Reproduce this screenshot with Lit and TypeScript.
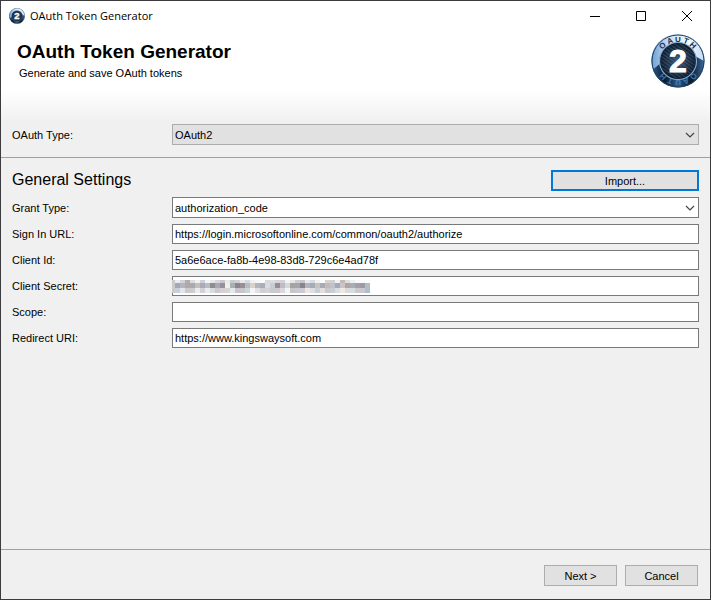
import { LitElement, html, css, svg } from "lit";
import { customElement, property } from "lit/decorators.js";

@customElement("oauth-badge")
class OauthBadge extends LitElement {
  @property({ type: Boolean }) small = false;

  static styles = css`
    :host { display: block; width: 54px; height: 54px; flex: none; }
    :host([small]) { width: 16px; height: 16px; }
    svg { display: block; width: 100%; height: 100%; }
    text { font-family: "Liberation Sans", Arial, sans-serif; font-weight: bold; text-anchor: middle; }
    .digit { font-size: 32px; fill: #fff; stroke: #fff; stroke-width: 1px; }
    .ring { font-size: 8px; fill: #15304e; }
    .low { fill: #4f8fca; opacity: 0.75; }
  `;

  private letters(cls: string, turn: number) {
    const angles = [-45, -22, 0, 22, 44];
    return "OAUTH".split("").map(
      (c, i) => svg`<text class=${cls} x="27" y="8" transform="rotate(${angles[i] + turn} 27 27)">${c}</text>`,
    );
  }

  render() {
    return html`<svg viewBox="0 0 54 54" aria-hidden="true">
      <defs>
        <linearGradient id="top" x1="0" y1="0" x2="1" y2="0">
          <stop offset="0" stop-color="#6c9fd3" />
          <stop offset=".3" stop-color="#c3daf1" />
          <stop offset=".7" stop-color="#f4f9ff" />
          <stop offset="1" stop-color="#c3dcf5" />
        </linearGradient>
        <linearGradient id="bottom" x1="0" y1="0" x2="1" y2="0">
          <stop offset="0" stop-color="#2f5e90" />
          <stop offset=".25" stop-color="#0b1a2c" />
          <stop offset=".5" stop-color="#2b5c90" />
          <stop offset=".75" stop-color="#0b1828" />
          <stop offset="1" stop-color="#3d6d9f" />
        </linearGradient>
        <radialGradient id="core">
          <stop offset="0" stop-color="#3b5878" />
          <stop offset="1" stop-color="#0a1728" />
        </radialGradient>
        <pattern id="weave" width="3" height="3" patternUnits="userSpaceOnUse" patternTransform="rotate(35)">
          <path d="M0 0H3" stroke="#7f9db9" stroke-width="1" opacity=".5" />
        </pattern>
      </defs>
      <circle cx="27" cy="27" r="26.5" fill="url(#bottom)" />
      <path d="M2 35.500A26.300 26.300 0 1 1 53 27L44 22L12 27Z" fill="url(#top)" />
      <circle cx="27" cy="27" r="26" fill="none" stroke="#1f3f63" stroke-width="1" />
      ${this.small ? "" : [this.letters("ring", 0), this.letters("ring low", 180)]}
      <circle cx="27" cy="27" r="18.500" fill="url(#core)" stroke="#7fa9d3" stroke-width="1.200" />
      <circle cx="27" cy="27" r="17.500" fill="url(#weave)" />
      <text class="digit" x="27" y="38">2</text>
    </svg>`;
  }
}

const MOSAIC = [
  "cbcbcb ececf0 cfd2dc b9a9a4 dcdce2 f0f0f0 ccd1d6 f4f4f4 e8e8ec d9d5d8 c9c6cf e6eae8 c9c9c9 d0d0d8 e8e8ee d3dce0 eef1f1 f6f6f6 fafafa d9d9d9 d8dde2 dcd2d4 cdd3d8 f4f4f4 e6e6e6 d0ccd0 c4c6ce e9e9e9 d6dde2 f0f0f0 fbfbfb dcd2d0 d0d0d0 f2f2f2 c6b9b4 dfdfdf f0f0f0 f8f8f8 fafafa fdfdfd",
  "cbcbcb a5a7b6 b4b6bf b3a8a4 a6aab5 c8beb9 a9abba b8bcc6 8f8c8e a8a8b2 978f9e edf2e2 a9afb8 8b8590 989097 b9bcc7 d8d2c8 b5b5bd adadb8 d9dde2 c6ccd2 9a8c93 c1bcc4 d0dae0 a9a39f a4a4ae 87838f b0b5be a6abb7 c9c3c0 aaaab4 c4bbb8 bcc3cb a4a8b8 c6c6ca b1a4a1 a9adb8 a5a0a5 9b9ba6 b0bec8",
  "cbcbcb c9cede e5e5e9 cacaca cdcdcd ececec d2d2d6 e6edf0 dadada c9c9cd d5d0d8 d6d6d0 e3e8ee c9c4cb c7c7c7 cbd5da f4f4f4 e0e0e0 cfcfd5 d2d2d8 c4ccd0 cfc7c9 d6dadf f4f4f4 c7c7cb c9c9d2 d0c9d3 eee6e0 dbe0e7 c7cfd4 e3dedb c9c9cc c8ced5 d8dde6 efe8e2 dadada d6dce0 cacaca c8c8d0 aebfc9",
].map((row) => row.split(" "));

@customElement("app-root")
class AppRoot extends LitElement {
  static styles = css`
    :host { display: block; color: #000; font: 11px/16px "Liberation Sans", Arial, sans-serif; }
    * { box-sizing: border-box; }
    .window { display: flex; flex-direction: column; min-height: 100vh; border: 1px solid #3c3c3e; background: #f0f0f0; }
    .titlebar { display: flex; align-items: center; height: 29px; padding-left: 8px; background: #fff; }
    .caption { flex: 1; margin-left: 5px; font-family: "Open Sans", "Noto Sans", sans-serif; }
    .sys { display: flex; align-items: center; justify-content: center; width: 46px; height: 29px; padding: 0; border: 0; background: none; }
    .banner { display: flex; justify-content: space-between; padding: 4px 5px 0 16px; height: 92px; background: linear-gradient(#fff 60px, #f0f0f0 92px); }
    h1 { margin: 7px 0 2px; font-size: 19px; line-height: 22px; }
    .sub { margin: 0 0 0 2px; }
    .row { display: grid; grid-template-columns: 160px 1fr; align-items: center; padding: 0 11px; }
    .type { padding-top: 2px; padding-bottom: 12px; border-bottom: 1px solid #a0a0a0; }
    .general { display: flex; flex: 1; flex-direction: column; gap: 6px; padding-top: 12px; }
    .head { display: flex; align-items: flex-start; justify-content: space-between; padding: 0 11px; }
    h2 { margin: 0; font-size: 16px; line-height: 20px; font-weight: normal; }
    .field { position: relative; display: grid; }
    input, select { width: 100%; height: 20px; margin: 0; padding: 0 2px; border: 1px solid #7a7a7a; border-radius: 0; background: #fff; color: #000; font: inherit; }
    select { height: 21px; appearance: none; }
    .type select { border-color: #adadad; background: #e1e1e1; }
    .chevron { position: absolute; right: 4px; top: 8px; pointer-events: none; }
    .mosaic { position: absolute; left: 0; top: 4px; pointer-events: none; }
    .footer { display: flex; justify-content: flex-end; gap: 8px; padding: 15px 12px 13px; border-top: 1px solid #a0a0a0; }
    .btn { width: 73px; height: 21px; padding: 0; border: 1px solid #adadad; background: #e1e1e1; color: #000; font: inherit; }
    .import { width: 148px; border: 2px solid #0078d7; }
  `;

  private chevron() {
    return html`<svg class="chevron" width="10" height="7" viewBox="0 0 10 7" aria-hidden="true">
      <path d="M1 1L5 5L9 1" fill="none" stroke="#444" stroke-width="1.200" />
    </svg>`;
  }

  private mosaic() {
    const tops = [0, 3, 8];
    return html`<svg class="mosaic" width="198" height="13" shape-rendering="crispEdges" aria-hidden="true">
      ${MOSAIC.map((row, r) =>
        row.map(
          (c, i) => svg`<rect x=${i ? i * 5 - 2 : 0} y=${tops[r]} width=${i ? 5 : 3} height=${r ? 5 : 3} fill="#${c}" />`,
        ),
      )}
    </svg>`;
  }

  private text(id: string, label: string, value: string) {
    return html`<div class="row">
      <label for=${id}>${label}</label>
      <div class="field"><input id=${id} type="text" .value=${value} /></div>
    </div>`;
  }

  render() {
    return html`<main class="window">
      <div class="titlebar">
        <oauth-badge small></oauth-badge>
        <span class="caption">OAuth Token Generator</span>
        <button class="sys" aria-label="Minimize"><svg width="10" height="10"><path d="M0 5.500H10" stroke="#000" /></svg></button>
        <button class="sys" aria-label="Maximize"><svg width="10" height="10"><path d="M.5.5H9.500V9.500H.5Z" fill="none" stroke="#000" /></svg></button>
        <button class="sys" aria-label="Close"><svg width="10" height="10"><path d="M0 0L10 10M10 0L0 10" stroke="#000" /></svg></button>
      </div>
      <header class="banner">
        <div>
          <h1>OAuth Token Generator</h1>
          <p class="sub">Generate and save OAuth tokens</p>
        </div>
        <oauth-badge></oauth-badge>
      </header>
      <div class="row type">
        <label for="type">OAuth Type:</label>
        <div class="field"><select id="type"><option>OAuth2</option></select>${this.chevron()}</div>
      </div>
      <section class="general">
        <div class="head"><h2>General Settings</h2><button class="btn import">Import...</button></div>
        <div class="row">
          <label for="grant">Grant Type:</label>
          <div class="field"><select id="grant"><option>authorization_code</option></select>${this.chevron()}</div>
        </div>
        ${this.text("url", "Sign In URL:", "https://login.microsoftonline.com/common/oauth2/authorize")}
        ${this.text("client", "Client Id:", "5a6e6ace-fa8b-4e98-83d8-729c6e4ad78f")}
        <div class="row">
          <label for="secret">Client Secret:</label>
          <div class="field"><input id="secret" type="password" />${this.mosaic()}</div>
        </div>
        ${this.text("scope", "Scope:", "")}
        ${this.text("redirect", "Redirect URI:", "https://www.kingswaysoft.com")}
      </section>
      <footer class="footer">
        <button class="btn">Next &gt;</button>
        <button class="btn">Cancel</button>
      </footer>
    </main>`;
  }
}
